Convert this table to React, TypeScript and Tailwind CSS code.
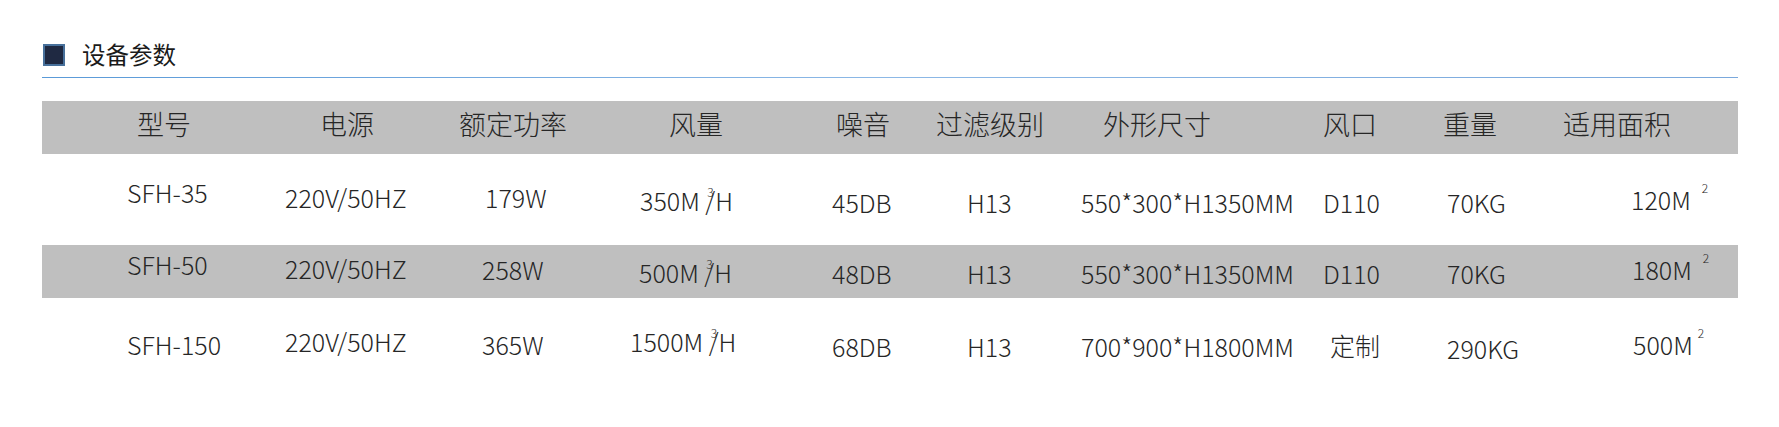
import React from 'react';

// column grid: spacer handled by row padding, then 10 columns
const GRID =
	'grid grid-cols-[158px_174px_171px_202px_104px_145px_242px_120px_120px_175px] pl-[85px]';

const Cube = ({ value }: { value: string }) => (
	<>
		{value}M{' '}
		<span className="inline-block relative">
			<sup className="absolute left-[2px] -top-[2px] text-[12px] leading-none">3</sup>
			/
		</span>
		H
	</>
);

const Area = ({ value, gap }: { value: string; gap: string }) => (
	<>
		{value}M<sup className={`text-[12px] leading-none -top-[17px] relative ${gap}`}>2</sup>
	</>
);

type Cell = { content: React.ReactNode; cls: string };

const header: Cell[] = [
	{ content: '型号', cls: 'pl-[10px]' },
	{ content: '电源', cls: 'pl-[35px]' },
	{ content: '额定功率', cls: 'pl-0' },
	{ content: '风量', cls: 'pl-[39px]' },
	{ content: '噪音', cls: 'pl-[4px]' },
	{ content: '过滤级别', cls: 'pl-0' },
	{ content: '外形尺寸', cls: 'pl-[22px]' },
	{ content: '风口', cls: 'pl-0' },
	{ content: '重量', cls: 'pl-0' },
	{ content: '适用面积', cls: 'pl-0' },
];

const rows: { bg: string; h: string; cells: Cell[] }[] = [
	{
		bg: 'bg-white',
		h: 'h-[91px]',
		cells: [
			{ content: 'SFH-35', cls: 'pl-0 pb-[14px]' },
			{ content: '220V/50HZ', cls: 'pl-0 pb-[4px]' },
			{ content: '179W', cls: 'pl-[26px] pb-[4px]' },
			{ content: <Cube value="350" />, cls: 'pl-[10px] pt-[1px]' },
			{ content: '45DB', cls: 'pl-0 pt-[6px]' },
			{ content: 'H13', cls: 'pl-[31px] pt-[6px]' },
			{ content: '550*300*H1350MM', cls: 'pl-0 pt-[6px]' },
			{ content: 'D110', cls: 'pl-0 pt-[6px]' },
			{ content: '70KG', cls: 'pl-[4px] pt-[6px]' },
			{ content: <Area value="120" gap="ml-[11px]" />, cls: 'pl-[68px] pb-[1px]' },
		],
	},
	{
		bg: 'bg-[#bfbfbf]',
		h: 'h-[53px]',
		cells: [
			{ content: 'SFH-50', cls: 'pl-0 pb-[14px]' },
			{ content: '220V/50HZ', cls: 'pl-0 pb-[7px]' },
			{ content: '258W', cls: 'pl-[23px] pb-[4px]' },
			{ content: <Cube value="500" />, cls: 'pl-[9px] pt-[2px]' },
			{ content: '48DB', cls: 'pl-0 pt-[4px]' },
			{ content: 'H13', cls: 'pl-[31px] pt-[4px]' },
			{ content: '550*300*H1350MM', cls: 'pl-0 pt-[4px]' },
			{ content: 'D110', cls: 'pl-0 pt-[4px]' },
			{ content: '70KG', cls: 'pl-[4px] pt-[4px]' },
			{ content: <Area value="180" gap="ml-[11px]" />, cls: 'pl-[69px] pb-[4px]' },
		],
	},
	{
		bg: 'bg-white',
		h: 'h-[91px]',
		cells: [
			{ content: 'SFH-150', cls: 'pl-0 pt-[2px]' },
			{ content: '220V/50HZ', cls: 'pl-0 pb-[4px]' },
			{ content: '365W', cls: 'pl-[23px] pt-[2px]' },
			{ content: <Cube value="1500" />, cls: 'pl-0 pb-[4px]' },
			{ content: '68DB', cls: 'pl-0 pt-[6px]' },
			{ content: 'H13', cls: 'pl-[31px] pt-[6px]' },
			{ content: '700*900*H1800MM', cls: 'pl-0 pt-[6px]' },
			{ content: '定制', cls: 'pl-[7px] pt-[4px]' },
			{ content: '290KG', cls: 'pl-[4px] pt-[10px]' },
			{ content: <Area value="500" gap="ml-[5px]" />, cls: 'pl-[70px] pt-[2px]' },
		],
	},
];

export default function App() {
	return (
		<div
			className="w-[1779px] h-[427px] bg-white overflow-hidden text-[#262626]"
			style={{ fontFamily: '"Noto Sans CJK SC", "Noto Sans", sans-serif' }}
		>
			{/* Section title */}
			<div className="flex items-center gap-[17px] ml-[43px] pt-[44px] h-[66px]">
				<div className="w-[22px] h-[22px] bg-[#1f2942] border-2 border-[#47709b]" />
				<h2 className="text-[23.5px] leading-none text-[#1a1a1a]">设备参数</h2>
			</div>
			<div className="ml-[42px] mt-[11px] w-[1696px] h-px bg-gradient-to-r from-[#5a9ad8] via-[#8cb8e6] to-[#7aa8dc]" />

			{/* Parameter table */}
			<div className="ml-[42px] mt-[23px] w-[1696px] font-light">
				<div className={`${GRID} h-[53px] bg-[#bfbfbf] text-[27px] text-[#262626]`}>
					{header.map((c, i) => (
						<div key={i} className={`flex items-center whitespace-nowrap pb-[6px] ${c.cls}`}>
							{c.content}
						</div>
					))}
				</div>
				{rows.map((r, ri) => (
					<div key={ri} className={`${GRID} ${r.h} ${r.bg} text-[25px]`}>
						{r.cells.map((c, ci) => (
							<div key={ci} className={`flex items-center whitespace-nowrap leading-none ${c.cls}`}>
								<span>{c.content}</span>
							</div>
						))}
					</div>
				))}
			</div>
		</div>
	);
}
